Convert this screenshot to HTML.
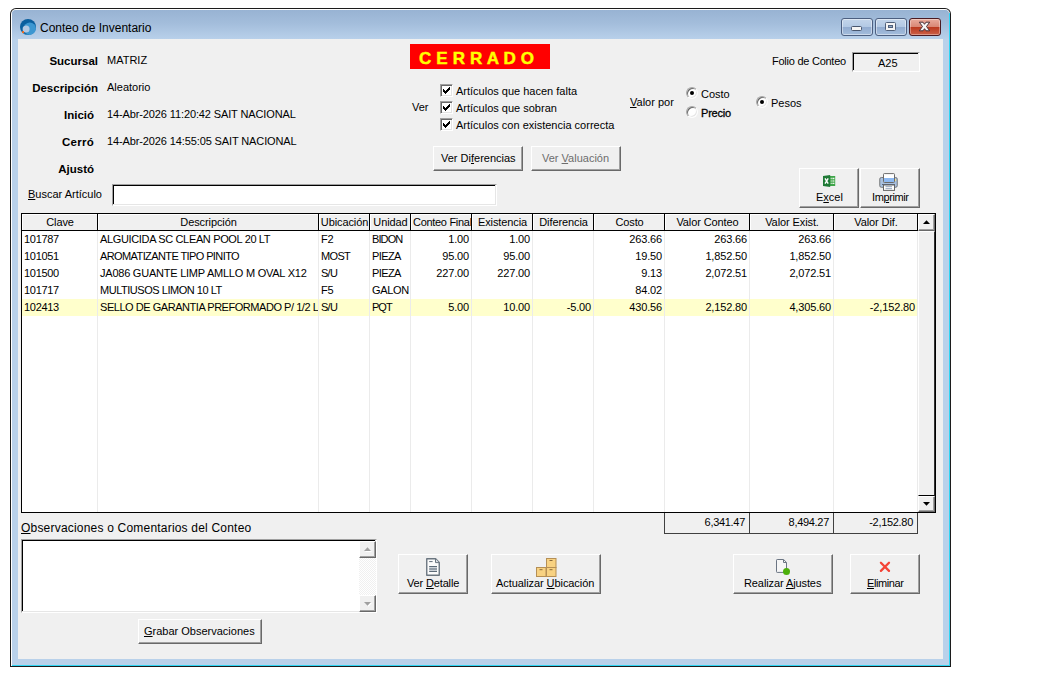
<!DOCTYPE html>
<html lang="es">
<head>
<meta charset="utf-8">
<title>Conteo de Inventario</title>
<style>
html,body{margin:0;padding:0;background:#fff;}
body{width:1044px;height:675px;position:relative;overflow:hidden;font-family:"Liberation Sans",Arial,sans-serif;font-size:11px;color:#000;}
*{box-sizing:border-box;}
.a{position:absolute;}
.t{position:absolute;white-space:nowrap;line-height:13px;font-size:11px;}
.b{font-weight:bold;}
u{text-decoration:underline;text-underline-offset:1px;text-decoration-thickness:1px;}
/* window frame */
#w0{left:10px;top:8px;width:941px;height:659px;background:#1c1c1c;border-radius:6px 6px 0 0;}
#w1{left:11px;top:9px;width:939px;height:657px;background:#fff;border-radius:5px 5px 0 0;}
#w1b{left:12px;top:10px;width:938px;height:656px;background:#2fd6f4;border-radius:4px 5px 0 0;}
#w2{left:12px;top:10px;width:937px;height:655px;background:#b9d1ea;border-radius:4px 4px 0 0;z-index:0;}
#tb{left:12px;top:10px;width:937px;height:29px;background:linear-gradient(#98b3d3,#a3bddb 45%,#b8d0ea);border-radius:4px 4px 0 0;}
#cl{left:18px;top:39px;width:925px;height:620px;background:#f0f0f0;}
/* classic 3d */
.btn{position:absolute;background:#f0f0f0;border:1px solid;border-color:#fff #696969 #696969 #fff;box-shadow:inset -1px -1px 0 #a0a0a0;}
.sunk{position:absolute;border:1px solid;border-color:#a0a0a0 #fff #fff #a0a0a0;box-shadow:inset -1px -1px 0 #e6e6e6,inset 1px 1px 0 #000;}
.chk{position:absolute;width:13px;height:13px;background:#fff;border:1px solid;border-color:#a0a0a0 #fff #fff #a0a0a0;box-shadow:inset 1px 1px 0 #696969,inset -1px -1px 0 #e3e3e3;}
.hd{position:absolute;top:214px;height:16px;background:#f0f0f0;border-left:1px solid #fff;border-top:1px solid #fff;text-align:center;line-height:13px;padding-top:1px;font-size:11px;white-space:nowrap;overflow:hidden;letter-spacing:-0.1px;}
.vl{position:absolute;top:213px;width:1px;height:18px;background:#000;}
.gl{position:absolute;top:231px;width:1px;height:281px;background:#ebebeb;}
.c{letter-spacing:-0.3px;position:absolute;white-space:nowrap;line-height:13px;font-size:11px;overflow:hidden;height:17px;padding-top:2px;}
.r{text-align:right;}

.cb{top:18px;height:18px;border:1px solid #4c5f80;border-radius:3px;background:linear-gradient(#c3d5ea 0%,#b3c9e4 48%,#92acd0 52%,#a3bddc 100%);box-shadow:inset 0 0 0 1px rgba(255,255,255,.45);}
.cb svg{position:absolute;left:0;top:0;}
.cx{border-color:#4a1a22;background:linear-gradient(#e9ab9d 0%,#d98876 48%,#bb3a20 52%,#cb6048 100%);box-shadow:inset 0 0 0 1px rgba(255,255,255,.35);}

.lb{right:946px;font-size:11.5px;}
.rad{position:absolute;width:12px;height:12px;border-radius:50%;background:#fff;border:1px solid;border-color:#a6a6a6 #fdfdfd #fdfdfd #a6a6a6;box-shadow:inset 1px 1px 0 #6a6a6a,inset -1px -1px 0 #e6e6e6;}
.rad i{position:absolute;left:3px;top:3px;width:4px;height:4px;border-radius:50%;background:#000;}
.chk svg{position:absolute;left:0;top:0;}

.trk{background:#f8f8f8;background-image:repeating-conic-gradient(#fff 0 25%,#f0f0f0 0 50%);background-size:2px 2px;}
</style>
</head>
<body>
<div class="a" id="w0"></div>
<div class="a" id="w1"></div>
<div class="a" style="left:949px;top:13px;width:1px;height:653px;background:#2fd6f4;"></div><div class="a" style="left:12px;top:665px;width:938px;height:1px;background:#2fd6f4;"></div>
<div class="a" id="w2"></div>
<div class="a" id="tb"></div>
<div class="a" id="cl"></div>
<!--TITLE-->
<svg class="a" style="left:20px;top:19px" width="16" height="16" viewBox="0 0 16 16">
<circle cx="8" cy="8" r="8" fill="#0a5f9e"/>
<circle cx="9.8" cy="9.6" r="6.1" fill="#3c97d1"/>
<path d="M3.2 13.4 A6.4 6.4 0 0 0 12 14.6 A8 8 0 0 1 3.2 13.4Z" fill="#43b4ea"/>
<circle cx="6.1" cy="9.9" r="3.5" fill="#b3c9e2"/>
<circle cx="3.1" cy="13.2" r="1.1" fill="#ff6a13"/>
</svg>
<div class="t" style="left:40px;top:21px;font-size:12px;line-height:15px;">Conteo de Inventario</div>
<div class="a cb" style="left:841px;width:32px;"><svg width="30" height="16" viewBox="0 0 30 16"><rect x="9.5" y="7.5" width="10" height="4" rx="1" fill="#f4f4f4" stroke="#48566e"/></svg></div>
<div class="a cb" style="left:875px;width:32px;"><svg width="30" height="16" viewBox="0 0 30 16"><rect x="9.5" y="3.5" width="10" height="8" rx="1" fill="#f4f4f4" stroke="#50607a"/><rect x="12.5" y="6.5" width="4" height="2" fill="#8fa8c8" stroke="#50607a"/></svg></div>
<div class="a cb cx" style="left:909px;width:32px;"><svg width="30" height="16" viewBox="0 0 30 16"><path d="M9.3 3.2 L13 3.2 L14.5 5.3 L16 3.2 L19.7 3.2 L16.5 7.5 L19.7 11.8 L16 11.8 L14.5 9.7 L13 11.8 L9.3 11.8 L12.5 7.5 Z" fill="#f6f6f6" stroke="#4a3038" stroke-width="1" stroke-linejoin="round"/></svg></div>

<!--FORM-->
<div class="t b lb" style="top:55px;">Sucursal</div>
<div class="t b lb" style="top:82px;">Descripción</div>
<div class="t b lb" style="top:109px;right:950px;">Inició</div>
<div class="t b lb" style="top:136px;right:950px;letter-spacing:0.25px;">Cerró</div>
<div class="t b lb" style="top:163px;right:950px;">Ajustó</div>
<div class="t" style="left:107px;top:54px;">MATRIZ</div>
<div class="t" style="left:107px;top:81px;">Aleatorio</div>
<div class="t" style="left:107px;top:108px;letter-spacing:-0.12px;">14-Abr-2026 11:20:42 SAIT NACIONAL</div>
<div class="t" style="left:107px;top:135px;letter-spacing:-0.12px;">14-Abr-2026 14:55:05 SAIT NACIONAL</div>
<div class="t" style="left:28px;top:188px;"><u>B</u>uscar Artículo</div>
<div class="sunk" style="left:112px;top:184px;width:385px;height:22px;background:#fff;"></div>

<div class="a" style="left:410px;top:44px;width:140px;height:25px;background:#ff0000;"></div>
<div class="t b" style="left:419px;top:49px;font-size:17px;line-height:20px;letter-spacing:0.17px;color:#ffff00;-webkit-text-stroke:0.45px #ffff00;">C E R R A D O</div>

<div class="t" style="left:412px;top:101px;">Ver</div>
<div class="chk" style="left:440px;top:84px;"><svg width="11" height="11" viewBox="0 0 11 11" shape-rendering="crispEdges"><path d="M2 4h1v3h-1zM3 5h1v3h-1zM4 6h1v3h-1zM5 5h1v3h-1zM6 4h1v3h-1zM7 3h1v3h-1zM8 2h1v3h-1z" fill="#000"/></svg></div>
<div class="chk" style="left:440px;top:101px;"><svg width="11" height="11" viewBox="0 0 11 11" shape-rendering="crispEdges"><path d="M2 4h1v3h-1zM3 5h1v3h-1zM4 6h1v3h-1zM5 5h1v3h-1zM6 4h1v3h-1zM7 3h1v3h-1zM8 2h1v3h-1z" fill="#000"/></svg></div>
<div class="chk" style="left:440px;top:118px;"><svg width="11" height="11" viewBox="0 0 11 11" shape-rendering="crispEdges"><path d="M2 4h1v3h-1zM3 5h1v3h-1zM4 6h1v3h-1zM5 5h1v3h-1zM6 4h1v3h-1zM7 3h1v3h-1zM8 2h1v3h-1z" fill="#000"/></svg></div>
<div class="t" style="left:456px;top:85px;">Artículos que hacen falta</div>
<div class="t" style="left:456px;top:102px;">Artículos que sobran</div>
<div class="t" style="left:456px;top:119px;">Artículos con existencia correcta</div>

<div class="btn" style="left:433px;top:146px;width:90px;height:25px;"></div>
<div class="t" style="left:441px;top:152px;">Ver Di<u>f</u>erencias</div>
<div class="btn" style="left:531px;top:146px;width:90px;height:25px;"></div>
<div class="t" style="left:542px;top:152px;color:#6d6d6d;">Ver <u>V</u>aluación</div>

<div class="t" style="left:630px;top:96px;"><u>V</u>alor por</div>
<div class="rad" style="left:686px;top:87px;"><i></i></div>
<div class="rad" style="left:686px;top:106px;"></div>
<div class="rad" style="left:756px;top:96px;"><i></i></div>
<div class="t" style="left:701px;top:88px;">Costo</div>
<div class="t" style="left:701px;top:107px;-webkit-text-stroke:0.3px #000;letter-spacing:-0.2px;">Precio</div>
<div class="t" style="left:771px;top:97px;">Pesos</div>

<div class="t" style="left:772px;top:55px;letter-spacing:-0.25px;">Folio de Conteo</div>
<div class="sunk" style="left:852px;top:52px;width:68px;height:20px;background:#f0f0f0;box-shadow:inset -1px -1px 0 #f0f0f0,inset 1px 1px 0 #000;"></div>
<div class="t" style="left:878px;top:57px;">A25</div>

<div class="btn" style="left:799px;top:168px;width:60px;height:40px;"></div>
<div class="btn" style="left:860px;top:168px;width:60px;height:40px;"></div>
<div class="t" style="left:816px;top:191px;">E<u>x</u>cel</div>
<div class="t" style="left:872px;top:191px;letter-spacing:-0.4px;">Im<u>p</u>rimir</div>
<svg class="a" style="left:823px;top:175px" width="13" height="13" viewBox="0 0 13 13">
<rect x="6.5" y="1" width="5.7" height="10" fill="#3fa549"/>
<g fill="#fff"><rect x="7.6" y="2.8" width="1.1" height="1.1"/><rect x="9.4" y="2.8" width="2" height="1.1"/><rect x="7.6" y="7.8" width="1.1" height="1.1"/><rect x="9.4" y="7.8" width="2" height="1.1"/></g>
<g fill="#a8d8a8"><rect x="7.6" y="4.6" width="1.1" height="2.6"/><rect x="9.4" y="4.6" width="2" height="2.6"/></g>
<path d="M0 1 L7.2 0 L7.2 12 L0 11Z" fill="#1f7a36"/>
<path d="M2 3.4 L5.2 8.6 M5.2 3.4 L2 8.6" stroke="#fff" stroke-width="1.4" fill="none"/>
</svg>
<svg class="a" style="left:879px;top:173px" width="19" height="18" viewBox="0 0 19 18">
<rect x="0.75" y="4.5" width="17.5" height="9.8" rx="1.6" fill="#a9c1e0" stroke="#6c6c6c" stroke-width="0.9"/>
<rect x="4.5" y="0.6" width="11" height="8.9" rx="0.8" fill="#fff" stroke="#6a6a6a" stroke-width="1"/>
<rect x="5" y="5" width="10" height="4" fill="#8db9f2"/>
<path d="M3 11.5 H16" stroke="#56657c" stroke-width="1"/>
<rect x="4.5" y="12" width="11" height="5.4" fill="#fff" stroke="#666" stroke-width="1"/>
<path d="M6.5 13.7 H13 M6.5 15.7 H13" stroke="#8798b3" stroke-width="0.9"/>
<rect x="16" y="6" width="1" height="2" fill="#f3e48c"/>
</svg>

<!--GRID-->
<div class="a" style="left:21px;top:213px;width:915px;height:300px;background:#000;"></div>
<div class="a" style="left:22px;top:214px;width:896px;height:16px;background:#f0f0f0;"></div>
<div class="a" style="left:22px;top:231px;width:896px;height:281px;background:#fff;"></div>
<div class="a" style="left:22px;top:299px;width:895px;height:17px;background:#ffffcc;"></div>
<div class="hd" style="left:22px;width:75px;">Clave</div>
<div class="hd" style="left:98px;width:220px;">Descripción</div>
<div class="hd" style="left:319px;width:50px;">Ubicación</div>
<div class="hd" style="left:370px;width:40px;">Unidad</div>
<div class="hd" style="left:411px;width:60px;text-align:left;padding-left:1px;letter-spacing:-0.3px;">Conteo Final</div>
<div class="hd" style="left:472px;width:60px;">Existencia</div>
<div class="hd" style="left:533px;width:60px;">Diferencia</div>
<div class="hd" style="left:594px;width:70px;">Costo</div>
<div class="hd" style="left:665px;width:84px;">Valor Conteo</div>
<div class="hd" style="left:750px;width:83px;">Valor Exist.</div>
<div class="hd" style="left:834px;width:83px;">Valor Dif.</div>
<div class="vl" style="left:97px;"></div><div class="gl" style="left:97px;"></div>
<div class="vl" style="left:318px;"></div><div class="gl" style="left:318px;"></div>
<div class="vl" style="left:369px;"></div><div class="gl" style="left:369px;"></div>
<div class="vl" style="left:410px;"></div><div class="gl" style="left:410px;"></div>
<div class="vl" style="left:471px;"></div><div class="gl" style="left:471px;"></div>
<div class="vl" style="left:532px;"></div><div class="gl" style="left:532px;"></div>
<div class="vl" style="left:593px;"></div><div class="gl" style="left:593px;"></div>
<div class="vl" style="left:664px;"></div><div class="gl" style="left:664px;"></div>
<div class="vl" style="left:749px;"></div><div class="gl" style="left:749px;"></div>
<div class="vl" style="left:833px;"></div><div class="gl" style="left:833px;"></div>
<div class="vl" style="left:917px;"></div><div class="gl" style="left:917px;"></div>
<div class="c" style="left:22px;top:231px;width:75px;padding-left:2px;">101787</div>
<div class="c" style="left:98px;top:231px;width:220px;padding-left:2px;letter-spacing:-0.35px;">ALGUICIDA SC CLEAN POOL 20 LT</div>
<div class="c" style="left:319px;top:231px;width:50px;padding-left:2px;">F2</div>
<div class="c" style="left:370px;top:231px;width:40px;padding-left:2px;letter-spacing:-0.9px;">BIDON</div>
<div class="c r" style="left:411px;top:231px;width:60px;padding-right:2px;letter-spacing:-0.15px;">1.00</div>
<div class="c r" style="left:472px;top:231px;width:60px;padding-right:2px;letter-spacing:-0.15px;">1.00</div>
<div class="c r" style="left:594px;top:231px;width:70px;padding-right:2px;letter-spacing:-0.15px;">263.66</div>
<div class="c r" style="left:665px;top:231px;width:84px;padding-right:2px;letter-spacing:-0.15px;">263.66</div>
<div class="c r" style="left:750px;top:231px;width:83px;padding-right:2px;letter-spacing:-0.15px;">263.66</div>
<div class="c" style="left:22px;top:248px;width:75px;padding-left:2px;">101051</div>
<div class="c" style="left:98px;top:248px;width:220px;padding-left:2px;letter-spacing:-0.6px;">AROMATIZANTE TIPO PINITO</div>
<div class="c" style="left:319px;top:248px;width:50px;padding-left:2px;letter-spacing:-0.65px;">MOST</div>
<div class="c" style="left:370px;top:248px;width:40px;padding-left:2px;letter-spacing:-0.6px;">PIEZA</div>
<div class="c r" style="left:411px;top:248px;width:60px;padding-right:2px;letter-spacing:-0.15px;">95.00</div>
<div class="c r" style="left:472px;top:248px;width:60px;padding-right:2px;letter-spacing:-0.15px;">95.00</div>
<div class="c r" style="left:594px;top:248px;width:70px;padding-right:2px;letter-spacing:-0.15px;">19.50</div>
<div class="c r" style="left:665px;top:248px;width:84px;padding-right:2px;letter-spacing:-0.15px;">1,852.50</div>
<div class="c r" style="left:750px;top:248px;width:83px;padding-right:2px;letter-spacing:-0.15px;">1,852.50</div>
<div class="c" style="left:22px;top:265px;width:75px;padding-left:2px;">101500</div>
<div class="c" style="left:98px;top:265px;width:220px;padding-left:2px;letter-spacing:-0.23px;">JA086 GUANTE LIMP AMLLO M OVAL X12</div>
<div class="c" style="left:319px;top:265px;width:50px;padding-left:2px;letter-spacing:-0.75px;">S/U</div>
<div class="c" style="left:370px;top:265px;width:40px;padding-left:2px;letter-spacing:-0.6px;">PIEZA</div>
<div class="c r" style="left:411px;top:265px;width:60px;padding-right:2px;letter-spacing:-0.15px;">227.00</div>
<div class="c r" style="left:472px;top:265px;width:60px;padding-right:2px;letter-spacing:-0.15px;">227.00</div>
<div class="c r" style="left:594px;top:265px;width:70px;padding-right:2px;letter-spacing:-0.15px;">9.13</div>
<div class="c r" style="left:665px;top:265px;width:84px;padding-right:2px;letter-spacing:-0.15px;">2,072.51</div>
<div class="c r" style="left:750px;top:265px;width:83px;padding-right:2px;letter-spacing:-0.15px;">2,072.51</div>
<div class="c" style="left:22px;top:282px;width:75px;padding-left:2px;">101717</div>
<div class="c" style="left:98px;top:282px;width:220px;padding-left:2px;letter-spacing:-0.465px;">MULTIUSOS LIMON 10 LT</div>
<div class="c" style="left:319px;top:282px;width:50px;padding-left:2px;">F5</div>
<div class="c" style="left:370px;top:282px;width:40px;padding-left:2px;">GALON</div>
<div class="c r" style="left:594px;top:282px;width:70px;padding-right:2px;letter-spacing:-0.15px;">84.02</div>
<div class="c" style="left:22px;top:299px;width:75px;padding-left:2px;">102413</div>
<div class="c" style="left:98px;top:299px;width:220px;padding-left:2px;letter-spacing:-0.46px;">SELLO DE GARANTIA PREFORMADO P/ 1/2 L</div>
<div class="c" style="left:319px;top:299px;width:50px;padding-left:2px;letter-spacing:-0.75px;">S/U</div>
<div class="c" style="left:370px;top:299px;width:40px;padding-left:2px;letter-spacing:-1.0px;">PQT</div>
<div class="c r" style="left:411px;top:299px;width:60px;padding-right:2px;letter-spacing:-0.15px;">5.00</div>
<div class="c r" style="left:472px;top:299px;width:60px;padding-right:2px;letter-spacing:-0.15px;">10.00</div>
<div class="c r" style="left:533px;top:299px;width:60px;padding-right:2px;letter-spacing:-0.15px;">-5.00</div>
<div class="c r" style="left:594px;top:299px;width:70px;padding-right:2px;letter-spacing:-0.15px;">430.56</div>
<div class="c r" style="left:665px;top:299px;width:84px;padding-right:2px;letter-spacing:-0.15px;">2,152.80</div>
<div class="c r" style="left:750px;top:299px;width:83px;padding-right:2px;letter-spacing:-0.15px;">4,305.60</div>
<div class="c r" style="left:834px;top:299px;width:83px;padding-right:2px;letter-spacing:-0.15px;">-2,152.80</div>
<div class="a" style="left:918px;top:214px;width:17px;height:298px;background:#f0f0f0;"></div>

<div class="btn" style="left:918px;top:214px;width:17px;height:17px;"><svg class="a" style="left:4px;top:5px" width="7" height="4" viewBox="0 0 7 4"><path d="M0 4 L3.5 0.2 L7 4Z" fill="#000"/></svg></div>
<div class="btn" style="left:918px;top:231px;width:17px;height:265px;border-bottom-color:#000;border-right-color:#303030;box-shadow:none;"></div>
<div class="btn" style="left:918px;top:496px;width:17px;height:16px;"><svg class="a" style="left:4px;top:5px" width="7" height="4" viewBox="0 0 7 4"><path d="M0 0 L7 0 L3.5 3.8Z" fill="#000"/></svg></div>
<div class="a" style="left:664px;top:513px;width:254px;height:21px;border:1px solid #404040;border-top:none;"></div>
<div class="a" style="left:749px;top:513px;width:1px;height:20px;background:#404040;"></div>
<div class="a" style="left:833px;top:513px;width:1px;height:20px;background:#404040;"></div>
<div class="c r" style="left:665px;top:514px;width:84px;padding-right:4px;">6,341.47</div>
<div class="c r" style="left:750px;top:514px;width:83px;padding-right:4px;">8,494.27</div>
<div class="c r" style="left:834px;top:514px;width:83px;padding-right:4px;">-2,152.80</div>
<!--BOTTOM-->
<div class="t" style="left:21px;top:521px;font-size:12px;line-height:15px;letter-spacing:0.2px;"><u>O</u>bservaciones o Comentarios del Conteo</div>
<div class="sunk" style="left:21px;top:539px;width:356px;height:74px;background:#fff;"></div>
<div class="a trk" style="left:359px;top:541px;width:17px;height:71px;"></div>
<div class="btn" style="left:359px;top:541px;width:17px;height:17px;"><svg class="a" style="left:4px;top:5px" width="8" height="5" viewBox="0 0 8 5"><path d="M1 5 L4.5 1.2 L8 5Z" fill="#fff"/><path d="M0 4 L3.5 0.2 L7 4Z" fill="#a0a0a0"/></svg></div>
<div class="btn" style="left:359px;top:595px;width:17px;height:17px;"><svg class="a" style="left:4px;top:6px" width="8" height="5" viewBox="0 0 8 5"><path d="M1 1 L8 1 L4.5 4.8Z" fill="#fff"/><path d="M0 0 L7 0 L3.5 3.8Z" fill="#a0a0a0"/></svg></div>

<div class="btn" style="left:138px;top:619px;width:124px;height:25px;"></div>
<div class="t" style="left:144px;top:625px;"><u>G</u>rabar Observaciones</div>

<div class="btn" style="left:398px;top:554px;width:70px;height:40px;"></div>
<div class="t" style="left:407px;top:577px;letter-spacing:-0.15px;">Ver <u>D</u>etalle</div>
<div class="btn" style="left:491px;top:554px;width:110px;height:40px;"></div>
<div class="t" style="left:496px;top:577px;letter-spacing:-0.07px;">Actualizar <u>U</u>bicación</div>
<div class="btn" style="left:733px;top:554px;width:100px;height:40px;"></div>
<div class="t" style="left:744px;top:577px;letter-spacing:-0.1px;">Realizar <u>A</u>justes</div>
<div class="btn" style="left:850px;top:554px;width:70px;height:40px;"></div>
<div class="t" style="left:867px;top:577px;letter-spacing:-0.4px;"><u>E</u>liminar</div>
<svg class="a" style="left:426px;top:558px" width="14" height="18" viewBox="0 0 14 18">
<path d="M0.75 0.75 H9.6 L13.25 4.4 V17.25 H0.75Z" fill="#fbfbfb" stroke="#6b7680" stroke-width="1.4" stroke-linejoin="round"/>
<path d="M9.5 1 V4.6 H13" fill="#dde2e7" stroke="#6b7680" stroke-width="1"/>
<rect x="3.2" y="8" width="7.8" height="6" fill="#cdd3d9"/>
<path d="M3.2 3.6 H6.6" stroke="#5d6b78" stroke-width="1"/>
<path d="M3.2 8.5 H11 M3.2 11 H11 M3.2 13.5 H11" stroke="#5d6b78" stroke-width="1"/>
</svg>
<svg class="a" style="left:536px;top:558px" width="21" height="20" viewBox="0 0 21 20">
<g fill="#f8d282" stroke="#b58f55" stroke-width="1">
<rect x="10.5" y="0.5" width="9.5" height="9"/>
<rect x="0.5" y="9.5" width="9.5" height="9"/>
<rect x="10.5" y="9.5" width="9.5" height="9"/>
</g>
<path d="M13.5 2.5 H16.5 M3.5 11.7 H6.5 M13.5 11.7 H16.5" stroke="#8a6a3a" stroke-width="1"/>
</svg>
<svg class="a" style="left:776px;top:559px" width="15" height="17" viewBox="0 0 15 17">
<path d="M1.2 0.5 H7.6 L10.5 3.4 V13.4 H1.2 Q0.5 13.4 0.5 12.7 V1.2 Q0.5 0.5 1.2 0.5Z" fill="#f6f6f6" stroke="#6b7583" stroke-width="1"/>
<path d="M7.5 0.8 V3.5 H10.3" fill="none" stroke="#6b7583" stroke-width="1"/>
<circle cx="10.5" cy="12.5" r="3.5" fill="#4caf0a"/>
</svg>
<svg class="a" style="left:878px;top:560px" width="14" height="14" viewBox="0 0 14 14">
<path d="M2.9 2.8 L11 10.9 M11 2.8 L2.9 10.9" stroke="#f44336" stroke-width="2.3" stroke-linecap="round" fill="none"/>
</svg>

</body>
</html>
